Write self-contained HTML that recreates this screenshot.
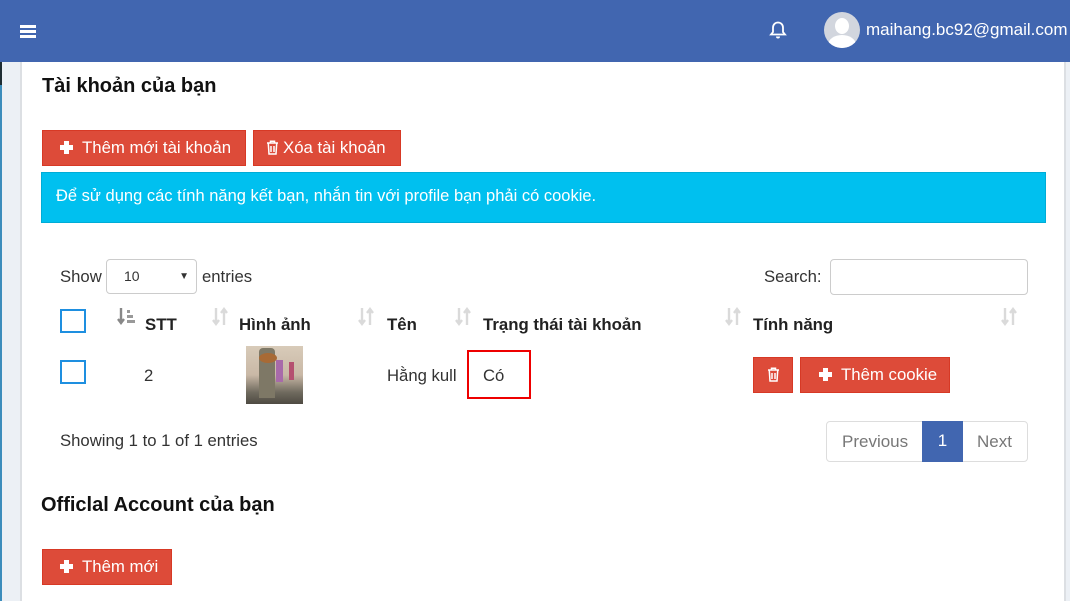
<!DOCTYPE html>
<html><head><meta charset="utf-8"><style>
*{margin:0;padding:0;box-sizing:border-box}
body{width:1070px;height:601px;overflow:hidden;background:#ecf0f5;font-family:"Liberation Sans",Arial,sans-serif;color:#333;position:relative;font-size:16.7px}
.a{position:absolute;white-space:nowrap}
.hdr{left:0;top:0;width:1070px;height:62px;background:#4166b0}
.btn{position:absolute;background:#dd4b39;border:1px solid #d73925;color:#fff;font-size:16.8px;line-height:34px;height:36px}
.cb{position:absolute;width:26px;height:24px;border:2px solid #1e8fe0;background:#fff}
.th{font-weight:bold;font-size:16.8px;color:#222}
.plus{display:inline-block;position:relative;width:13px;height:13px;vertical-align:-1px;margin-right:9px}
.plus:before{content:"";position:absolute;left:4px;top:0;width:5px;height:13px;background:#fff}
.plus:after{content:"";position:absolute;left:0;top:4px;width:13px;height:5px;background:#fff}
</style></head><body>
<div class="a hdr"></div>
<div class="a" style="left:0;top:62px;width:2px;height:23px;background:#1f2d33"></div>
<div class="a" style="left:0;top:85px;width:2px;height:516px;background:#3c8dbc"></div>
<div class="a" style="left:20px;top:62px;width:2px;height:539px;background:#dcdfe3"></div>
<div class="a" style="left:22px;top:62px;width:1042px;height:539px;background:#fff"></div>
<div class="a" style="left:1064px;top:62px;width:2px;height:539px;background:#dcdfe3"></div>
<div class="a" style="left:20px;top:25px;width:16px;height:3px;background:#fff"></div>
<div class="a" style="left:20px;top:30px;width:16px;height:3px;background:#fff"></div>
<div class="a" style="left:20px;top:35px;width:16px;height:3px;background:#fff"></div>
<svg class="a" style="left:768px;top:20px" width="20" height="20" viewBox="0 0 20 20"><path d="M10 2.5c-3 0-5 2.3-5 5.2v4.3l-2 2.5h14l-2-2.5V7.7c0-2.9-2-5.2-5-5.2z" fill="none" stroke="#fff" stroke-width="1.8"/><path d="M8 16.5a2 2 0 0 0 4 0z" fill="#fff"/></svg>
<div class="a" style="left:824px;top:12px;width:36px;height:36px;border-radius:50%;background:#d2d6de;overflow:hidden">
<div style="position:absolute;left:11px;top:6px;width:14px;height:16px;border-radius:50%;background:#fff"></div>
<div style="position:absolute;left:4px;top:23px;width:28px;height:20px;border-radius:50% 50% 0 0;background:#fff"></div></div>
<div class="a" style="left:866px;top:20px;font-size:17px;color:#fff">maihang.bc92@gmail.com</div>
<div class="a" style="left:42px;top:75px;font-size:20px;font-weight:bold;color:#111">Tài khoản của bạn</div>
<div class="btn" style="left:42px;top:130px;width:204px;padding-left:17px"><span class="plus"></span>Thêm mới tài khoản</div>
<div class="btn" style="left:253px;top:130px;width:148px;padding-left:12px"><svg width="13" height="15" viewBox="0 0 13 15" style="vertical-align:-2px;margin-right:4px"><path d="M1 3h11M4.5 3V1.3h4V3M2.3 3.5l.7 10.5h7l.7-10.5M5 6v6M8 6v6" fill="none" stroke="#fff" stroke-width="1.5"/></svg>Xóa tài khoản</div>
<div class="a" style="left:41px;top:172px;width:1005px;height:51px;background:#00c0ef;border:1px solid #00acd6;color:#fff;font-size:16.5px;line-height:47px;padding-left:14px">Để sử dụng các tính năng kết bạn, nhắn tin với profile bạn phải có cookie.</div>
<div class="a" style="left:60px;top:267px">Show</div>
<div class="a" style="left:106px;top:259px;width:91px;height:35px;border:1px solid #ccc;border-radius:4px;font-size:14px;line-height:33px;padding-left:17px">10<span style="position:absolute;right:7px;top:0;font-size:10px">▼</span></div>
<div class="a" style="left:202px;top:267px">entries</div>
<div class="a" style="left:764px;top:267px">Search:</div>
<div class="a" style="left:830px;top:259px;width:198px;height:36px;border:1px solid #ccc;border-radius:4px"></div>
<div class="cb" style="left:60px;top:309px"></div>
<div class="cb" style="left:60px;top:360px"></div>
<svg class="a" style="left:117px;top:307px" width="20" height="20" viewBox="0 0 20 20"><path d="M4 1v14M1 12l3 4 3-4" fill="none" stroke="#888" stroke-width="2.4"/><rect x="10" y="3" width="3" height="3" fill="#999"/><rect x="10" y="8" width="6" height="3" fill="#999"/><rect x="10" y="13" width="8" height="3" fill="#999"/></svg>
<svg class="a" style="left:212px;top:307px;opacity:.3" width="18" height="20" viewBox="0 0 18 20"><path d="M4 1v15M1 13l3 4 3-4M12 18V3M9 6l3-4 3 4" fill="none" stroke="#888" stroke-width="2.4"/></svg>
<svg class="a" style="left:358px;top:307px;opacity:.3" width="18" height="20" viewBox="0 0 18 20"><path d="M4 1v15M1 13l3 4 3-4M12 18V3M9 6l3-4 3 4" fill="none" stroke="#888" stroke-width="2.4"/></svg>
<svg class="a" style="left:455px;top:307px;opacity:.3" width="18" height="20" viewBox="0 0 18 20"><path d="M4 1v15M1 13l3 4 3-4M12 18V3M9 6l3-4 3 4" fill="none" stroke="#888" stroke-width="2.4"/></svg>
<svg class="a" style="left:725px;top:307px;opacity:.3" width="18" height="20" viewBox="0 0 18 20"><path d="M4 1v15M1 13l3 4 3-4M12 18V3M9 6l3-4 3 4" fill="none" stroke="#888" stroke-width="2.4"/></svg>
<svg class="a" style="left:1001px;top:307px;opacity:.3" width="18" height="20" viewBox="0 0 18 20"><path d="M4 1v15M1 13l3 4 3-4M12 18V3M9 6l3-4 3 4" fill="none" stroke="#888" stroke-width="2.4"/></svg>
<div class="a th" style="left:145px;top:315px">STT</div>
<div class="a th" style="left:239px;top:315px">Hình ảnh</div>
<div class="a th" style="left:387px;top:315px">Tên</div>
<div class="a th" style="left:483px;top:315px">Trạng thái tài khoản</div>
<div class="a th" style="left:753px;top:315px">Tính năng</div>
<div class="a" style="left:144px;top:366px">2</div>
<div class="a" style="left:246px;top:346px;width:57px;height:58px;background:linear-gradient(180deg,#d8cbb9 0%,#c9b8a6 50%,#6f6a5e 80%,#4e4a42 100%)">
<div style="position:absolute;left:13px;top:2px;width:16px;height:50px;background:#7e7866;border-radius:4px 4px 0 0"></div>
<div style="position:absolute;left:13px;top:7px;width:18px;height:10px;background:#a86a35;border-radius:50%"></div>
<div style="position:absolute;left:30px;top:14px;width:7px;height:22px;background:#a86aaa"></div>
<div style="position:absolute;left:43px;top:16px;width:5px;height:18px;background:#b55070"></div></div>
<div class="a" style="left:387px;top:366px">Hằng kull</div>
<div class="a" style="left:467px;top:350px;width:64px;height:49px;border:2px solid #e00"></div>
<div class="a" style="left:483px;top:366px">Có</div>
<div class="btn" style="left:753px;top:357px;width:40px;height:36px;text-align:center"><svg width="13" height="15" viewBox="0 0 13 15" style="vertical-align:-2px"><path d="M1 3h11M4.5 3V1.3h4V3M2.3 3.5l.7 10.5h7l.7-10.5M5 6v6M8 6v6" fill="none" stroke="#fff" stroke-width="1.5"/></svg></div>
<div class="btn" style="left:800px;top:357px;width:150px;height:36px;padding-left:18px"><span class="plus"></span>Thêm cookie</div>
<div class="a" style="left:60px;top:431px">Showing 1 to 1 of 1 entries</div>
<div class="a" style="left:826px;top:421px;width:202px;height:41px;border:1px solid #ddd;border-radius:4px;font-size:17px;color:#777;line-height:39px">
<span style="position:absolute;left:15px">Previous</span>
<span style="position:absolute;left:95px;top:-1px;width:41px;height:41px;background:#4166b0;color:#fff;text-align:center">1</span>
<span style="position:absolute;left:150px">Next</span></div>
<div class="a" style="left:41px;top:494px;font-size:20px;font-weight:bold;color:#111">Officlal Account của bạn</div>
<div class="btn" style="left:42px;top:549px;width:130px;padding-left:17px"><span class="plus"></span>Thêm mới</div>
</body></html>
